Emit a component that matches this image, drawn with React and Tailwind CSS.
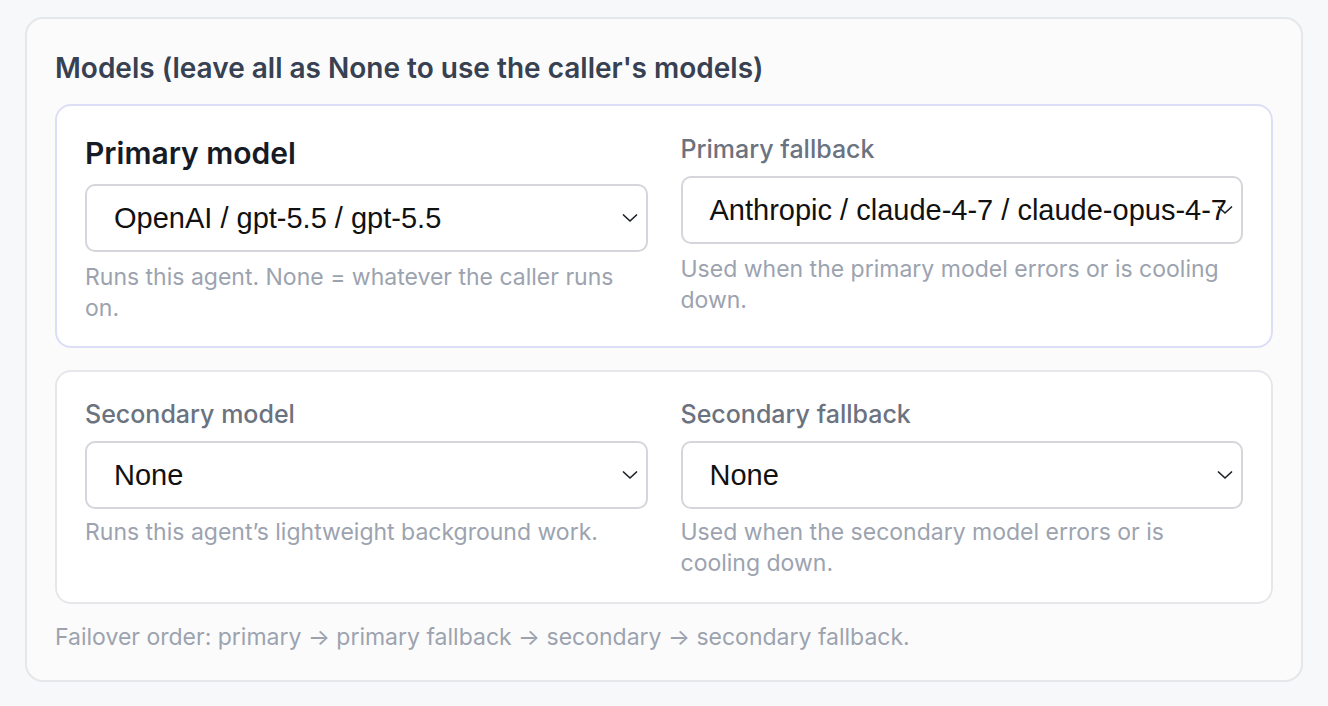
const SANS = { fontFamily: 'Inter, "Noto Sans", sans-serif' };

// small native-looking caret used at the right edge of each select
function Caret() {
  return (
    <svg
      viewBox="0 0 16 9"
      className="absolute right-[8px] top-1/2 h-[9px] w-[16px] -translate-y-1/2"
      fill="none"
      stroke="#1f2328"
      strokeWidth="1.7"
      strokeLinecap="round"
      strokeLinejoin="round"
    >
      <polyline points="1.5,1.5 8,7.5 14.5,1.5" />
    </svg>
  );
}

function ModelSelect({ value }) {
  return (
    <div className="relative flex h-[68px] items-center overflow-hidden rounded-[10px] border-2 border-[#d4d6db] bg-white pl-[27px]">
      <span
        className="whitespace-nowrap text-[29px] leading-none text-[#111]"
        style={{ fontFamily: '"Liberation Sans", Arial, sans-serif' }}
      >
        {value}
      </span>
      <Caret />
    </div>
  );
}

function Field({ label, value, help, strong, tight }) {
  return (
    <div className="flex flex-col">
      {strong ? (
        <div className="mb-[12px] text-[30px] font-semibold leading-[38px] text-[#161b26]">{label}</div>
      ) : (
        <div className="mb-[12px] text-[25px] font-medium leading-[30px] text-[#6b7280]">{label}</div>
      )}
      <ModelSelect value={value} />
      <p className={`${tight ? 'mt-[8px]' : 'mt-[10px]'} text-[23px] leading-[31px] text-[#9ca3af]`}>{help}</p>
    </div>
  );
}

export default function App() {
  return (
    <div className="min-h-screen bg-[#f7f8fa] px-[25px] pt-[17px]" style={SANS}>
      <section className="rounded-[18px] border-2 border-[#e6e7eb] bg-[#fbfbfc] px-[28px] pb-[28px] pt-[32px]">
        <h2 className="mb-[19px] text-[28px] font-semibold leading-[34px] text-[#374151]">
          Models (leave all as None to use the caller's models)
        </h2>

        <div className="grid grid-cols-2 gap-x-[33px] rounded-[16px] border-2 border-[#dcdef7] bg-white px-[28px] pb-[22px] pt-[28px]">
          <Field
            strong
            label="Primary model"
            value="OpenAI / gpt-5.5 / gpt-5.5"
            help="Runs this agent. None = whatever the caller runs on."
          />
          <Field
            label="Primary fallback"
            value="Anthropic / claude-4-7 / claude-opus-4-7"
            help="Used when the primary model errors or is cooling down."
          />
        </div>

        <div className="mt-[22px] grid grid-cols-2 gap-x-[33px] rounded-[16px] border-2 border-[#e6e7eb] bg-white px-[28px] pb-[23px] pt-[27px]">
          <Field
            tight
            label="Secondary model"
            value="None"
            help="Runs this agent’s lightweight background work."
          />
          <Field
            tight
            label="Secondary fallback"
            value="None"
            help="Used when the secondary model errors or is cooling down."
          />
        </div>

        <p className="mt-[18px] text-[23px] leading-[30px] text-[#9ca3af]">
          Failover order: primary → primary fallback → secondary → secondary fallback.
        </p>
      </section>
    </div>
  );
}
